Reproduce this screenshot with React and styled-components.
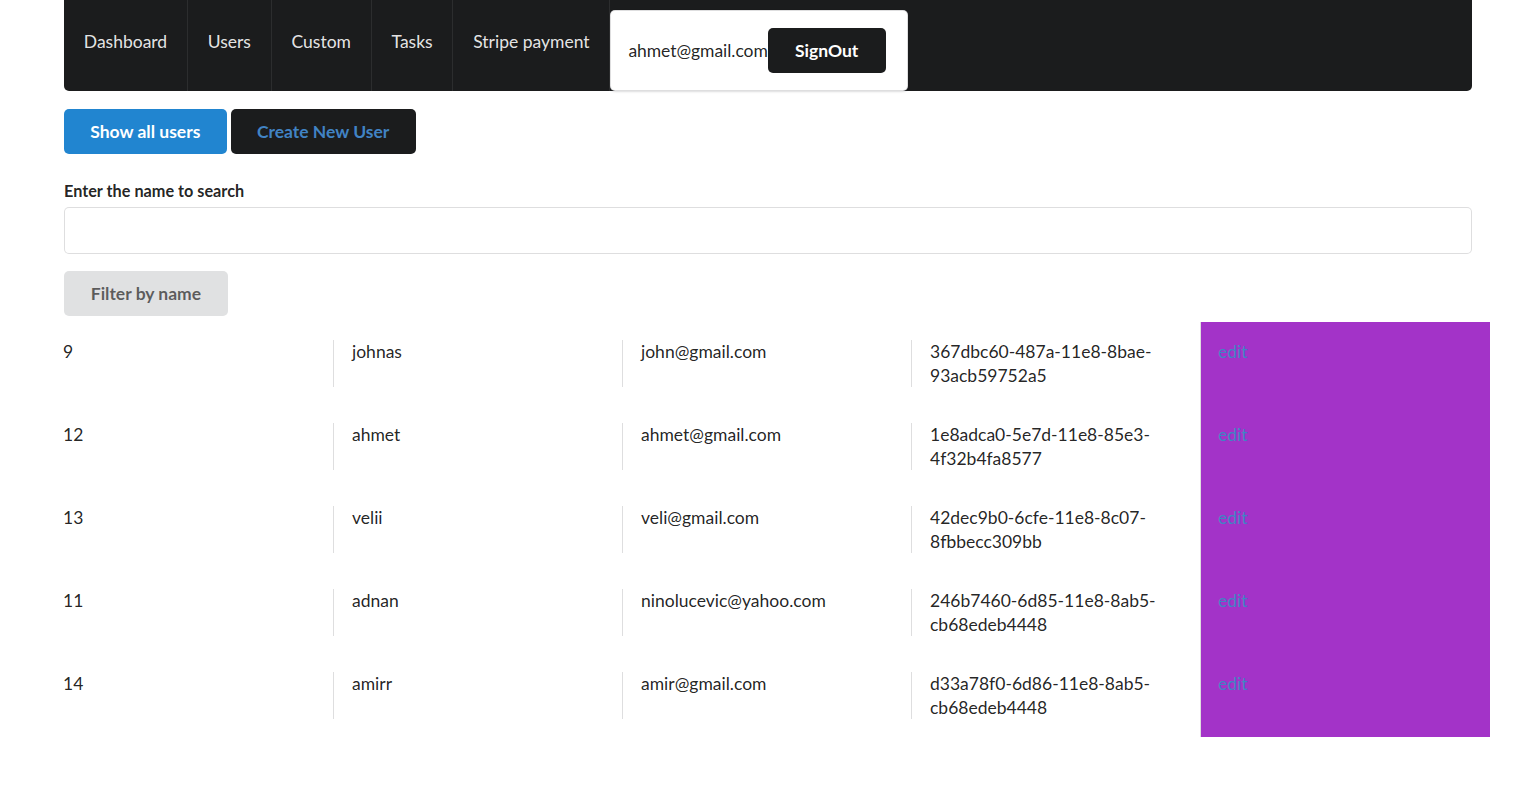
import React from "react";
import styled, { createGlobalStyle } from "styled-components";

const Global = createGlobalStyle`
  html, body { margin: 0; padding: 0; background: #fff; }
  body {
    font-family: Lato, "Helvetica Neue", Arial, sans-serif;
    font-size: 17.5px;
    line-height: 1.4285em;
    color: rgba(0,0,0,.87);
  }
  * { box-sizing: border-box; }
`;

const Page = styled.div`
  width: 1408px;
  margin-left: 64px;
`;

const Menu = styled.nav`
  display: flex;
  align-items: stretch;
  background: #1b1c1d;
  border-radius: 0 0 5px 5px;
  height: 91px;
`;

const MenuItem = styled.a`
  display: flex;
  align-items: center;
  padding: 0 19.8px 7px;
  color: rgba(255,255,255,.9);
  font-size: 17.5px;
  line-height: 17.5px;
  border-right: 1px solid rgba(255,255,255,.08);
  cursor: pointer;
  white-space: nowrap;
`;

const UserSegment = styled.div`
  display: flex;
  align-items: center;
  margin-top: 10px;
  padding: 0 21px 0 17px;
  background: #fff;
  border: 1px solid rgba(34,36,38,.15);
  border-radius: 5px;
  box-shadow: 0 1px 2px 0 rgba(34,36,38,.15);
`;

const Email = styled.span`
  font-size: 17.5px;
  letter-spacing: -0.05px;
  color: rgba(0,0,0,.87);
`;

const Button = styled.button`
  font-family: Lato, "Helvetica Neue", Arial, sans-serif;
  font-weight: 700;
  font-size: 17.5px;
  line-height: 17.5px;
  height: 45px;
  padding: 0 ${p => p.$px || "26.25px"};
  border: none;
  border-radius: 5px;
  cursor: pointer;
  background: ${p => p.$bg};
  color: ${p => p.$fg};
  white-space: nowrap;
`;

const ButtonRow = styled.div`
  display: flex;
  gap: 4px;
  margin-top: 18px;
`;

const Form = styled.form`
  margin-top: 25px;
`;

const Label = styled.label`
  display: block;
  font-size: 16.25px;
  font-weight: 700;
  line-height: 23px;
  margin-bottom: 5px;
  color: rgba(0,0,0,.87);
`;

const Input = styled.input`
  display: block;
  width: 100%;
  height: 47px;
  border: 1px solid rgba(34,36,38,.15);
  border-radius: 5px;
  padding: 0 17.5px;
  font-family: Lato, sans-serif;
  font-size: 17.5px;
  outline: none;
`;

const FilterWrap = styled.div`
  margin-top: 17px;
`;

const Grid = styled.div`
  margin: 6px -18px 0 -19px;
`;

const Row = styled.div`
  display: grid;
  grid-template-columns: repeat(5, 1fr);
  padding: 18px 0;
`;

const Cell = styled.div`
  padding: 0 18px;
  font-size: 17.5px;
  line-height: 23.5px;
  min-height: 47px;
  color: rgba(0,0,0,.87);
  ${p => p.$divided && `box-shadow: -1px 0 0 0 rgba(34,36,38,.15);`}
`;

const PurpleCell = styled.div`
  background: #a333c8;
  margin: -18px 0;
  padding: 18px 17px;
  font-size: 17.5px;
  line-height: 23.5px;
  box-shadow: -1px 0 0 0 rgba(34,36,38,.15);
`;

const EditLink = styled.a`
  color: #4183c4;
  cursor: pointer;
`;

const users = [
  { id: 9, name: "johnas", email: "john@gmail.com", uuid: "367dbc60-487a-11e8-8bae-93acb59752a5" },
  { id: 12, name: "ahmet", email: "ahmet@gmail.com", uuid: "1e8adca0-5e7d-11e8-85e3-4f32b4fa8577" },
  { id: 13, name: "velii", email: "veli@gmail.com", uuid: "42dec9b0-6cfe-11e8-8c07-8fbbecc309bb" },
  { id: 11, name: "adnan", email: "ninolucevic@yahoo.com", uuid: "246b7460-6d85-11e8-8ab5-cb68edeb4448" },
  { id: 14, name: "amirr", email: "amir@gmail.com", uuid: "d33a78f0-6d86-11e8-8ab5-cb68edeb4448" },
];

export default function App() {
  return (
    <>
      <Global />
      <Page>
        <Menu>
          <MenuItem>Dashboard</MenuItem>
          <MenuItem>Users</MenuItem>
          <MenuItem>Custom</MenuItem>
          <MenuItem>Tasks</MenuItem>
          <MenuItem>Stripe payment</MenuItem>
          <UserSegment>
            <Email>ahmet@gmail.com</Email>
            <Button $bg="#1b1c1d" $fg="#fff" $px="27.25px">SignOut</Button>
          </UserSegment>
        </Menu>
        <ButtonRow>
          <Button $bg="#2185d0" $fg="#fff">Show all users</Button>
          <Button $bg="#1b1c1d" $fg="#4183c4">Create New User</Button>
        </ButtonRow>
        <Form onSubmit={e => e.preventDefault()}>
          <Label>Enter the name to search</Label>
          <Input type="text" />
          <FilterWrap>
            <Button type="button" $bg="#e0e1e2" $fg="rgba(0,0,0,.6)" $px="26.75px">Filter by name</Button>
          </FilterWrap>
        </Form>
        <Grid>
          {users.map(u => (
            <Row key={u.id}>
              <Cell>{u.id}</Cell>
              <Cell $divided>{u.name}</Cell>
              <Cell $divided>{u.email}</Cell>
              <Cell $divided>{u.uuid}</Cell>
              <PurpleCell><EditLink>edit</EditLink></PurpleCell>
            </Row>
          ))}
        </Grid>
      </Page>
    </>
  );
}
